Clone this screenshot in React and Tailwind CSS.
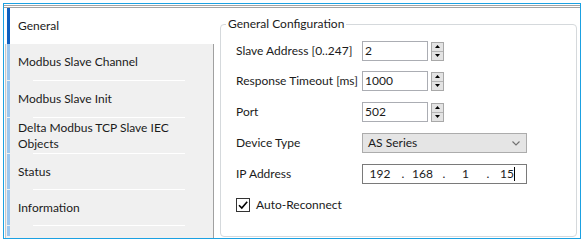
import React from "react";

const ITEMS = [
  { label: "General", h: "h-[36px]", active: true },
  { label: "Modbus Slave Channel", h: "h-[37px]" },
  { label: "Modbus Slave Init", h: "h-[37px]" },
  { label: "Delta Modbus TCP Slave IEC Objects", h: "h-[36px]" },
  { label: "Status", h: "h-[36px]" },
  { label: "Information", h: "h-[36px]" },
];

const Spin = () => (
  <div className="ml-[3px] flex h-[19px] w-[13px] flex-col border border-[#a8a8a8] bg-[#e3e3e3]">
    <div className="flex flex-1 items-center justify-center border-b border-[#b4b4b4]">
      <svg width="5" height="3" viewBox="0 0 5 3">
        <path d="M0 3 L2.5 0 L5 3 Z" fill="#000" />
      </svg>
    </div>
    <div className="flex flex-1 items-center justify-center">
      <svg width="5" height="3" viewBox="0 0 5 3">
        <path d="M0 0 L2.5 3 L5 0 Z" fill="#000" />
      </svg>
    </div>
  </div>
);

const NumField = ({ value }) => (
  <div className="flex items-center">
    <div className="flex h-[20px] w-[66px] items-center border border-[#abadb3] bg-white pl-[2px]">
      {value}
    </div>
    <Spin />
  </div>
);

const Row = ({ label, mt, children }) => (
  <div className={`flex h-[20px] items-center ${mt}`}>
    <div className="w-[126px]">{label}</div>
    {children}
  </div>
);

export default function App() {
  return (
    <div className="h-[243px] w-[584px] bg-white pl-[3px] pt-[3px] font-['Lato','Liberation_Sans',sans-serif] text-[12px] leading-[16px] text-[#1b1b1b]">
      <div className="flex h-[236px] w-[578px] flex-col border border-[#1ba1e2]">
        <div className="mt-[1px] h-[3px] border-y border-[#a3a3a3]" />
        <div className="flex min-h-0 flex-1">
          {/* sidebar */}
          <div className="ml-[1px] flex w-[209px] flex-col">
            {ITEMS.map((it) => (
              <div
                key={it.label}
                className={`flex ${it.h} border-l ${
                  it.active
                    ? "border-white bg-white"
                    : "border-r border-l-[#c8c8c8] border-r-[#a0a0a0] bg-[#f0f0f0]"
                }`}
              >
                <div
                  className={`ml-[1px] w-[3px] ${
                    it.active ? "bg-[#1060c0]" : "mb-[1px] bg-[#9cc7ef]"
                  }`}
                />
                <div className="flex flex-1 flex-col">
                  <div className="flex flex-1 items-center pl-[8px] pr-[20px]">
                    {it.label}
                  </div>
                  {!it.active && (
                    <div className="ml-[23px] h-px w-[152px] bg-white" />
                  )}
                </div>
              </div>
            ))}
            <div className="flex flex-1 border-x border-l-[#c8c8c8] border-r-[#a0a0a0] bg-[#f0f0f0]">
              <div className="ml-[1px] mb-[2px] w-[3px] bg-[#9cc7ef]" />
            </div>
          </div>

          {/* content */}
          <div className="flex flex-1 flex-col bg-white pb-[1px] pl-[6px] pr-[3px] pt-[8px]">
            <fieldset className="flex-1 rounded-[4px] border border-[#d5d9dc] px-[15px]">
              <legend className="-ml-[10px] px-[2px] leading-[16px]">
                General Configuration
              </legend>
              <Row label="Slave Address [0..247]" mt="mt-[9px]">
                <NumField value="2" />
              </Row>
              <Row label="Response Timeout [ms]" mt="mt-[10px]">
                <NumField value="1000" />
              </Row>
              <Row label="Port" mt="mt-[11px]">
                <NumField value="502" />
              </Row>
              <Row label="Device Type" mt="mt-[11px]">
                <div className="flex h-[20px] w-[165px] items-center justify-between border border-[#acacac] bg-[#e5e5e5] pl-[5px] pr-[6px]">
                  <span>AS Series</span>
                  <svg width="8" height="5" viewBox="0 0 8 5">
                    <path d="M0.5 0.5 L4 4 L7.5 0.5" fill="none" stroke="#707070" strokeWidth="1.1" />
                  </svg>
                </div>
              </Row>
              <Row label="IP Address" mt="mt-[11px]">
                <div className="flex h-[20px] w-[165px] items-center border border-[#7a7a7a] bg-white">
                  <span className="w-[34px] text-center">192</span>
                  <span className="w-[12px] text-center">.</span>
                  <span className="w-[27px] text-center">168</span>
                  <span className="w-[16px] text-center">.</span>
                  <span className="w-[27px] text-center">1</span>
                  <span className="w-[18px] text-center">.</span>
                  <span className="pl-[3px]">15</span>
                  <span className="h-[14px] w-px bg-black" />
                </div>
              </Row>
              <div className="mt-[14px] flex h-[14px] items-center">
                <div className="flex h-[14px] w-[14px] items-center justify-center border border-[#333] bg-white">
                  <svg width="12" height="12" viewBox="0 0 12 12">
                    <path d="M2 6.2 L4.8 9 L10.2 2.8" fill="none" stroke="#000" strokeWidth="1.6" />
                  </svg>
                </div>
                <span className="ml-[6px]">Auto-Reconnect</span>
              </div>
            </fieldset>
          </div>
        </div>
      </div>
    </div>
  );
}
